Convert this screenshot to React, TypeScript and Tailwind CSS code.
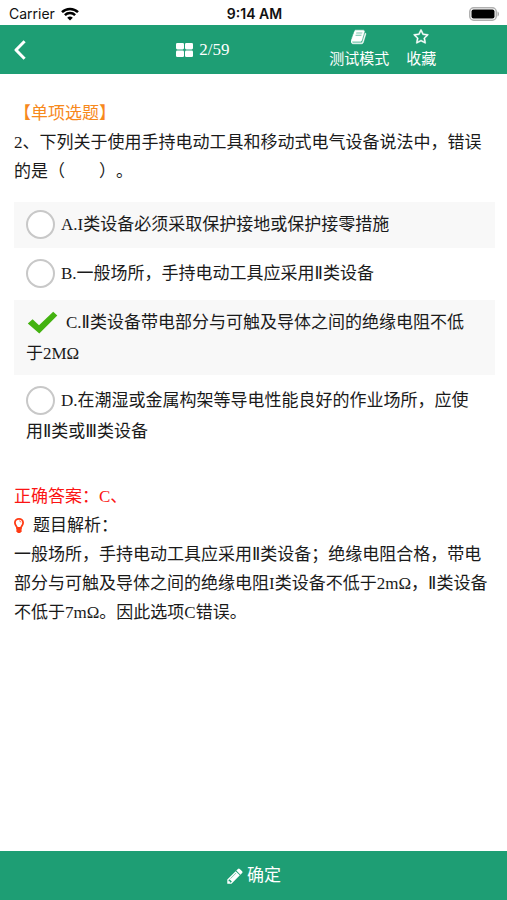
import { useState } from "react";

const fonts = "font-['Liberation_Serif','DejaVu_Sans','Noto_Sans_CJK_SC',serif]";

function WifiIcon() {
  return (
    <svg viewBox="0 0 18 14" className="h-[14px] w-[18px]" fill="none" stroke="#000" strokeWidth="2.5">
      <path d="M1 5.2a11.4 11.4 0 0 1 16 0" />
      <path d="M3.9 8.2a7.2 7.2 0 0 1 10.2 0" />
      <path d="M9 13.6 6.2 10.8a4 4 0 0 1 5.6 0z" fill="#000" stroke="none" />
    </svg>
  );
}

function BatteryIcon() {
  return (
    <svg viewBox="0 0 31 14" className="h-[14px] w-[31px]">
      <rect x="0.75" y="0.75" width="26.5" height="12.5" rx="4" fill="#fff" stroke="#b0b0b0" strokeWidth="1.5" />
      <rect x="2.5" y="2.5" width="23" height="9" rx="2" fill="#000" />
      <path d="M28.5 4.5c2 .6 2 4.4 0 5z" fill="#aaa" />
    </svg>
  );
}

function BookIcon() {
  return (
    <svg viewBox="0 0 1792 1792" className="size-4" fill="currentColor" stroke="currentColor" strokeWidth="50">
      <path d="M1639 478q40 57 18 129l-275 906q-19 64-76.5 107.5t-122.5 43.5h-923q-77 0-148.5-53.5t-99.5-131.5q-24-67-2-127 0-4 3-27t4-37q1-8-3-21.5t-3-19.5q2-11 8-21t16.5-23.5 16.5-23.5q23-38 45-91.5t30-91.5q3-10 .5-30t-.5-28q3-11 17-28t17-23q21-36 42-92t25-90q1-9-2.5-32t.5-28q4-13 22-30.5t22-22.5q19-26 42.5-84.5t27.5-96.5q1-8-3-25.5t-2-26.5q2-8 9-18t18-23 17-21q8-12 16.5-30.5t15-35 16-36 19.5-32 26.5-23.5 36-11.5 47.5 5.5l-1 3q38-9 51-9h761q74 0 114 56t18 130l-274 906q-36 119-71.5 153.5t-128.5 34.5h-869q-27 0-38 15-11 16-1 43 24 70 144 70h923q29 0 56-15.5t35-41.5l300-987q7-22 5-57 38 15 59 43zm-1064 2q-4 13 2 22.5t20 9.5h608q13 0 25.5-9.5t16.5-22.5l21-64q4-13-2-22.5t-20-9.5h-608q-13 0-25.5 9.5t-16.5 22.5zm-83 256q-4 13 2 22.5t20 9.5h608q13 0 25.5-9.5t16.5-22.5l21-64q4-13-2-22.5t-20-9.5h-608q-13 0-25.5 9.5t-16.5 22.5z" />
    </svg>
  );
}

function StarIcon() {
  return (
    <svg viewBox="0 0 1792 1792" className="size-4" fill="currentColor" stroke="currentColor" strokeWidth="50">
      <path d="M1201 1004l306-297-422-62-189-382-189 382-422 62 306 297-73 421 378-199 377 199zm527-357q0 22-26 48l-363 354 86 500q1 7 1 20 0 50-41 50-19 0-40-12l-449-236-449 236q-22 12-40 12-21 0-31.5-14.5t-10.5-35.5q0-6 2-20l86-500-364-354q-25-27-25-48 0-37 56-46l502-73 225-455q19-41 49-41t49 41l225 455 502 73q56 9 56 46z" />
    </svg>
  );
}

function PencilIcon() {
  return (
    <svg viewBox="0 0 1792 1792" className="size-[18px]" fill="currentColor">
      <path d="M491 1536l91-91-235-235-91 91v107h128v128h107zm523-928q0-22-22-22-10 0-17 7l-542 542q-7 7-7 17 0 22 22 22 10 0 17-7l542-542q7-7 7-17zm-54-192l416 416-832 832h-416v-416zm683 96q0 53-37 90l-166 166-416-416 166-165q36-38 90-38 53 0 91 38l235 234q37 39 37 91z" />
    </svg>
  );
}

function GridIcon() {
  return (
    <svg viewBox="0 0 17 14" className="h-[14px] w-[17px]" fill="currentColor">
      <rect width="8" height="6.4" rx="1.3" />
      <rect x="9" width="8" height="6.4" rx="1.3" />
      <rect y="7.6" width="8" height="6.4" rx="1.3" />
      <rect x="9" y="7.6" width="8" height="6.4" rx="1.3" />
    </svg>
  );
}

function BulbIcon() {
  return (
    <svg viewBox="0 0 10 15" className="h-[15px] w-[10px]" fill="none" stroke="#ff3b14">
      <path d="M3.2 10.2C3.1 8.3.9 7.4.9 4.8.9 2.5 2.7.9 5 .9s4.1 1.6 4.1 3.9c0 2.6-2.2 3.5-2.3 5.4z" strokeWidth="1.8" />
      <path d="M5.2 2.9c1 0 1.7.6 1.7 1.5" strokeWidth=".8" />
      <path d="M2.4 9h5.2v4.300L6.200 15H3.800L2.400 13.300z" fill="#ff3b14" stroke="none" />
    </svg>
  );
}

function CheckIcon() {
  return (
    <svg viewBox="0 0 31 23" className="-my-2 mr-2 ml-px inline-block h-[23px] w-[31px] align-[2px]">
      <path d="M.8 12.6 5.6 8.3 12 14.2 26.2.8 30.3 4.6 12.3 22.6z" fill="#43b210" />
    </svg>
  );
}

const options = [
  { id: "A", text: "A.I类设备必须采取保护接地或保护接零措施" },
  { id: "B", text: "B.一般场所，手持电动工具应采用Ⅱ类设备" },
  { id: "C", text: "C.Ⅱ类设备带电部分与可触及导体之间的绝缘电阻不低于2MΩ" },
  { id: "D", text: "D.在潮湿或金属构架等导电性能良好的作业场所，应使用Ⅱ类或Ⅲ类设备" },
];

export default function App() {
  const [selected, setSelected] = useState("C");

  return (
    <div
      className={`flex min-h-screen flex-col bg-white text-[17px] leading-[29px] text-[#1a1a1a] [text-spacing-trim:space-all] ${fonts}`}
    >
      <div className="grid h-[25px] grid-cols-3 items-center pt-[2px] pr-[7px] pl-[9px] font-['Inter',sans-serif] text-sm leading-4 text-[#111]">
        <div className="flex items-center gap-[6px]">
          <span>Carrier</span>
          <WifiIcon />
        </div>
        <div className="text-center font-semibold">9:14 AM</div>
        <div className="flex justify-end">
          <BatteryIcon />
        </div>
      </div>

      <header className="grid h-[49px] grid-cols-[20%_40%_1fr] bg-[#1e9e74] text-white">
        <button type="button" aria-label="返回" className="flex items-center pl-[14px]">
          <svg viewBox="0 0 12 20" className="h-5 w-3" fill="none" stroke="currentColor" strokeWidth="3" strokeLinejoin="round">
            <path d="M10.6 1.2 2 10l8.6 8.8" />
          </svg>
        </button>
        <button type="button" className="flex items-center justify-center gap-[6px]">
          <GridIcon />
          <span>2/59</span>
        </button>
        <div className="flex gap-[17px] pt-1 pl-[25px] text-[15px] leading-5">
          <button type="button" className="flex flex-col items-center gap-1">
            <BookIcon />
            测试模式
          </button>
          <button type="button" className="flex flex-col items-center gap-1">
            <StarIcon />
            收藏
          </button>
        </div>
      </header>

      <main className="flex-1 pt-[25px] pr-3 pl-[14px]">
        <div className="text-[#f7891c]">【单项选题】</div>
        <h1>2、下列关于使用手持电动工具和移动式电气设备说法中，错误的是（　　）。</h1>

        <fieldset className="mt-4 flex flex-col gap-[3px]">
          {options.map((option, index) => (
            <label
              key={option.id}
              className={`relative min-h-[46px] pt-[7px] pr-4 pb-[6px] pl-3 leading-[31px] ${index % 2 === 0 ? "bg-[#f8f8f8]" : "bg-white"}`}
            >
              <input
                type="radio"
                name="answer"
                value={option.id}
                checked={selected === option.id}
                onChange={() => setSelected(option.id)}
                className={
                  selected === option.id
                    ? "sr-only"
                    : "-my-2 mr-[6px] inline-block size-[29px] appearance-none rounded-full border-2 border-[#c8c8c8] bg-white align-[-1px]"
                }
              />
              {selected === option.id && <CheckIcon />}
              {option.text}
            </label>
          ))}
        </fieldset>

        <section className="mt-[29px]">
          <p className="text-[#fb1414]">正确答案：C、</p>
          <h2 className="flex items-center gap-[9px]">
            <BulbIcon />
            题目解析：
          </h2>
          <p>
            一般场所，手持电动工具应采用Ⅱ类设备；绝缘电阻合格，带电部分与可触及导体之间的绝缘电阻I类设备不低于2mΩ，Ⅱ类设备不低于7mΩ。因此选项C错误。
          </p>
        </section>
      </main>

      <button type="button" className="flex h-[49px] w-full items-center justify-center gap-[3px] bg-[#1e9e74] text-white">
        <PencilIcon />
        确定
      </button>
    </div>
  );
}
